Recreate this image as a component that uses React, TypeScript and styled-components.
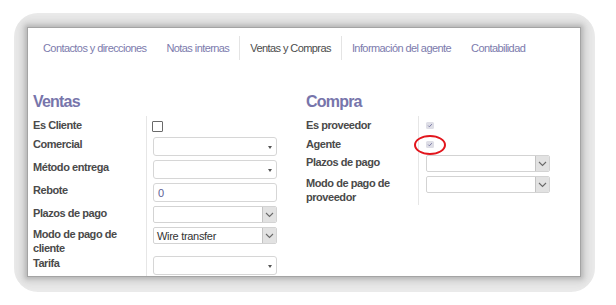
import React from 'react';
import styled, {createGlobalStyle} from "styled-components";

// Global
const GlobalStyle = createGlobalStyle`
  body {
    margin: 0;
    background: #ffffff;
    font-family: "Liberation Sans", Arial, sans-serif;
  }
`

type RowProps = {
    h: number
}

const Caret = () => (
    <StyledCaret/>
)

const Chevron = () => (
    <StyledChevronBox>
        <svg width="9" height="6" viewBox="0 0 9 6" fill="none" xmlns="http://www.w3.org/2000/svg">
            <polyline points="1,1 4.5,4.5 8,1" stroke="#6a6a6a" strokeWidth="1.1" fill="none"/>
        </svg>
    </StyledChevronBox>
)

const SmallCheck = () => (
    <StyledSmallCheck>
        <svg width="8" height="7" viewBox="0 0 8 7" fill="none" xmlns="http://www.w3.org/2000/svg">
            <polyline points="2.2,3.6 3.4,4.8 5.8,2.2" stroke="#7a7aa6" strokeWidth="1" fill="none"/>
        </svg>
    </StyledSmallCheck>
)

// FC
const App: React.FC = () => {
    return (
        <>
            <GlobalStyle/>
            <StyledPage>
                <StyledFrame>
                    <StyledPanel>
                        <StyledTabs>
                            <StyledTab>Contactos y direcciones</StyledTab>
                            <StyledTab>Notas internas</StyledTab>
                            <StyledTab active>Ventas y Compras</StyledTab>
                            <StyledTab>Información del agente</StyledTab>
                            <StyledTab>Contabilidad</StyledTab>
                        </StyledTabs>

                        <StyledBody>
                            {/* Ventas */}
                            <StyledGroup>
                                <StyledHeading>Ventas</StyledHeading>
                                <StyledRow h={19}>
                                    <StyledLabel labelWidth={113}>Es Cliente</StyledLabel>
                                    <StyledField fieldPad={6}>
                                        <StyledCheckbox/>
                                    </StyledField>
                                </StyledRow>
                                <StyledRow h={23}>
                                    <StyledLabel labelWidth={113}>Comercial</StyledLabel>
                                    <StyledField fieldPad={6}>
                                        <StyledSelect h={19}><span/><Caret/></StyledSelect>
                                    </StyledField>
                                </StyledRow>
                                <StyledRow h={23}>
                                    <StyledLabel labelWidth={113}>Método entrega</StyledLabel>
                                    <StyledField fieldPad={6}>
                                        <StyledSelect h={19}><span/><Caret/></StyledSelect>
                                    </StyledField>
                                </StyledRow>
                                <StyledRow h={23}>
                                    <StyledLabel labelWidth={113}>Rebote</StyledLabel>
                                    <StyledField fieldPad={6}>
                                        <StyledInput h={19}>0</StyledInput>
                                    </StyledField>
                                </StyledRow>
                                <StyledRow h={21}>
                                    <StyledLabel labelWidth={113}>Plazos de pago</StyledLabel>
                                    <StyledField fieldPad={6}>
                                        <StyledNativeSelect h={17}><span/><Chevron/></StyledNativeSelect>
                                    </StyledField>
                                </StyledRow>
                                <StyledRow h={29}>
                                    <StyledLabel labelWidth={113}>Modo de pago de cliente</StyledLabel>
                                    <StyledField fieldPad={6}>
                                        <StyledNativeSelect h={17}>
                                            <StyledValue>Wire transfer</StyledValue>
                                            <Chevron/>
                                        </StyledNativeSelect>
                                    </StyledField>
                                </StyledRow>
                                <StyledRow h={23}>
                                    <StyledLabel labelWidth={113}>Tarifa</StyledLabel>
                                    <StyledField fieldPad={6}>
                                        <StyledSelect h={19}><span/><Caret/></StyledSelect>
                                    </StyledField>
                                </StyledRow>
                            </StyledGroup>

                            {/* Compra */}
                            <StyledGroup>
                                <StyledHeading>Compra</StyledHeading>
                                <StyledRow h={19}>
                                    <StyledLabel labelWidth={112}>Es proveedor</StyledLabel>
                                    <StyledField fieldPad={7}>
                                        <StyledMarked>
                                            <SmallCheck/>
                                        </StyledMarked>
                                    </StyledField>
                                </StyledRow>
                                <StyledRow h={18}>
                                    <StyledLabel labelWidth={112}>Agente</StyledLabel>
                                    <StyledField fieldPad={7}>
                                        <StyledMarked>
                                            <SmallCheck/>
                                            <StyledRedCircle/>
                                        </StyledMarked>
                                    </StyledField>
                                </StyledRow>
                                <StyledRow h={21}>
                                    <StyledLabel labelWidth={112}>Plazos de pago</StyledLabel>
                                    <StyledField fieldPad={7}>
                                        <StyledNativeSelect h={17}><span/><Chevron/></StyledNativeSelect>
                                    </StyledField>
                                </StyledRow>
                                <StyledRow h={31}>
                                    <StyledLabel labelWidth={112}>Modo de pago de proveedor</StyledLabel>
                                    <StyledField fieldPad={7}>
                                        <StyledNativeSelect h={17}><span/><Chevron/></StyledNativeSelect>
                                    </StyledField>
                                </StyledRow>
                            </StyledGroup>
                        </StyledBody>
                    </StyledPanel>
                </StyledFrame>
            </StyledPage>
        </>
    );
};

export default App;

// Style
// Frame
const StyledPage = styled.div`
  padding: 13px 0 0 14px;
`
const StyledFrame = styled.div`
  box-sizing: border-box;
  width: 581px;
  height: 279px;
  padding: 15px 15px 15px 14px;
  border-radius: 24px;
  background: #ececec;
  overflow: hidden;
`
const StyledPanel = styled.div`
  height: 248px;
  background: #ffffff;
  overflow: hidden;
  box-shadow: 0 0 0 1px #a4a4a4, 0 0 4px 3px #b8b8b8, 0 0 10px 7px #d2d2d2;
`
// Tabs
const StyledTabs = styled.div`
  display: flex;
  padding: 8px 0 0 5px;
`
const StyledTab = styled.div<{ active?: boolean }>`
  display: flex;
  align-items: center;
  height: 24px;
  padding: 0 10px;
  font-size: 11px;
  letter-spacing: -0.58px;
  white-space: nowrap;
  color: ${props => props.active ? '#4c4c4c' : '#7c7bad'};
  border-left: ${props => props.active ? '1px solid #e4e4e4' : 'none'};
  border-right: ${props => props.active ? '1px solid #e4e4e4' : 'none'};
`
// Groups
const StyledBody = styled.div`
  display: grid;
  grid-template-columns: 273px 273px;
  padding: 32px 0 0 5px;
`
const StyledGroup = styled.div`
  display: flex;
  flex-direction: column;
`
const StyledHeading = styled.h2`
  margin: 0 0 4px;
  font-size: 16px;
  line-height: 20px;
  font-weight: 700;
  letter-spacing: -0.8px;
  color: #7775ab;
`
const StyledRow = styled.div<RowProps>`
  display: flex;
  height: ${props => props.h}px;
`
const StyledLabel = styled.div<{ labelWidth: number }>`
  box-sizing: border-box;
  width: ${props => props.labelWidth}px;
  padding-top: 2px;
  font-size: 11px;
  line-height: 14px;
  font-weight: 700;
  letter-spacing: -0.45px;
  color: #4a4a4a;
`
const StyledField = styled.div<{ fieldPad: number }>`
  padding: 2px 0 0 ${props => props.fieldPad}px;
  border-left: 1px solid #e6e6e6;
`
// Controls
const StyledCheckbox = styled.div`
  box-sizing: border-box;
  width: 11px;
  height: 11px;
  margin: 3px 0 0 -1px;
  border: 1px solid #6a6a6a;
  border-radius: 1px;
  background: #ffffff;
`
const StyledSmallCheck = styled.div`
  display: flex;
  width: 8px;
  height: 7px;
  border-radius: 1.5px;
  background: #dedee6;
`
const StyledMarked = styled.div`
  position: relative;
  width: 8px;
  margin-top: 4px;
`
const StyledRedCircle = styled.div`
  position: absolute;
  left: -12px;
  top: -6px;
  width: 28px;
  height: 16px;
  border: 2px solid #e2161d;
  border-radius: 50%;
`
const StyledSelect = styled.div<RowProps>`
  box-sizing: border-box;
  display: flex;
  align-items: center;
  justify-content: space-between;
  width: 124px;
  height: ${props => props.h}px;
  padding: 0 4px 0 4px;
  border: 1px solid #d6d6d6;
  border-radius: 3px;
  background: #ffffff;
`
const StyledCaret = styled.span`
  width: 0;
  height: 0;
  margin-top: 1px;
  border-left: 2px solid transparent;
  border-right: 2px solid transparent;
  border-top: 3px solid #555555;
`
const StyledInput = styled.div<RowProps>`
  box-sizing: border-box;
  display: flex;
  align-items: center;
  width: 124px;
  height: ${props => props.h}px;
  padding: 0 4px;
  border: 1px solid #d6d6d6;
  border-radius: 3px;
  font-size: 11px;
  color: #5d5d94;
`
const StyledNativeSelect = styled.div<RowProps>`
  box-sizing: border-box;
  display: flex;
  align-items: stretch;
  justify-content: space-between;
  width: 124px;
  height: ${props => props.h}px;
  border: 1px solid #d3d3d3;
  border-radius: 2px;
  background: #ffffff;
  overflow: hidden;
`
const StyledValue = styled.span`
  display: flex;
  align-items: center;
  padding-left: 3px;
  font-size: 11px;
  letter-spacing: -0.3px;
  color: #333333;
`
const StyledChevronBox = styled.span`
  display: flex;
  align-items: center;
  justify-content: center;
  width: 13px;
  background: #e2e2e2;
  border-left: 1px solid #c4c4c4;
`
